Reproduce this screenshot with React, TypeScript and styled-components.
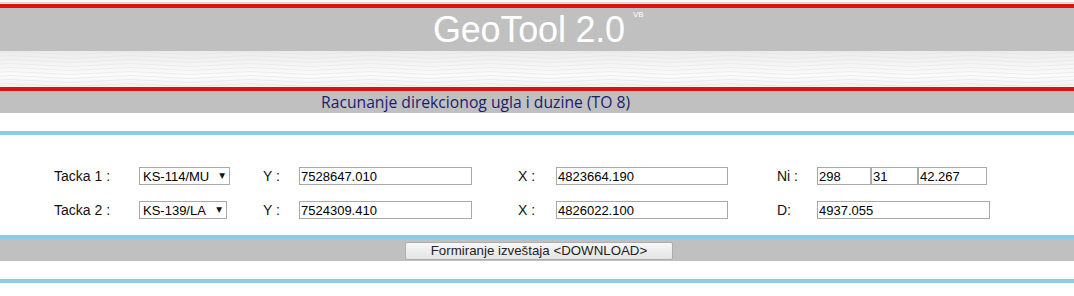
import React from "react";
import styled, { createGlobalStyle } from "styled-components";

const Global = createGlobalStyle`
  html, body { margin: 0; padding: 0; background: #fff; }
  body { font-family: "Liberation Sans", Arial, sans-serif; }
`;

const Page = styled.div`
  width: 1074px;
  display: flex;
  flex-direction: column;
`;

const TopEdge = styled.div`
  height: 4px;
  background: linear-gradient(to bottom, #fbf8f8 0 2px, #e2d6d6 2px 3px, #f4e4e4 3px 4px);
`;

const Rule = styled.div<{ $color: string; $h?: number }>`
  height: ${(p) => p.$h ?? 4}px;
  background: ${(p) => p.$color};
`;

const TitleBand = styled.div`
  height: 43px;
  box-sizing: border-box;
  padding: 2px 0 0 433px;
  background: #c0c0c0;
  display: flex;
  align-items: flex-start;
`;

const Title = styled.h1`
  margin: 0;
  font-family: "Liberation Sans", Arial, sans-serif;
  font-weight: normal;
  font-size: 36px;
  line-height: 40px;
  color: #ffffff;
  letter-spacing: -0.2px;
`;

const Version = styled.span`
  font-family: "Liberation Sans", Arial, sans-serif;
  font-size: 8px;
  line-height: 8px;
  color: #ffffff;
  margin: 1px 0 0 8px;
`;

const WaveBand = styled.div`
  height: 36px;
  background: linear-gradient(to bottom, #ececec 0%, #f7f7f7 45%, #fbfbfb 70%, #f2f2f2 100%);
  overflow: hidden;
  svg { display: block; }
`;

const SubBand = styled.div`
  height: 22px;
  background: #c0c0c0;
  display: flex;
  align-items: center;
  padding-left: 321px;
`;

const Subtitle = styled.div`
  font-family: "Open Sans", sans-serif;
  font-size: 15.7px;
  line-height: 20px;
  color: #1c1c6c;
`;

const Spacer = styled.div<{ $h: number }>`
  height: ${(p) => p.$h}px;
`;

const Form = styled.div`
  padding: 32px 0 16px 54px;
  display: flex;
  flex-direction: column;
  gap: 16px;
`;

const Row = styled.div`
  display: grid;
  grid-template-columns: 85px 124px 36px 219px 38px 221px 40px auto;
  align-items: center;
  height: 18px;
`;

const Label = styled.span`
  font-family: "Liberation Sans", Arial, sans-serif;
  font-size: 14px;
  color: #111;
  white-space: pre;
`;

const SelectBox = styled.div<{ $w: number }>`
  width: ${(p) => p.$w}px;
  height: 18px;
  box-sizing: border-box;
  border: 1px solid #a9a9a9;
  background: #fff;
  display: flex;
  align-items: center;
  justify-content: space-between;
  padding: 0 4px 0 3px;
  font-family: "Liberation Sans", Arial, sans-serif;
  font-size: 13px;
  color: #000;
`;

const Arrow = styled.span`
  font-family: "DejaVu Sans", sans-serif;
  font-size: 7.5px;
  line-height: 8px;
  color: #111;
`;

const Input = styled.input<{ $w: number }>`
  width: ${(p) => p.$w}px;
  height: 18px;
  box-sizing: border-box;
  border: 1px solid #a9a9a9;
  padding: 0 1px;
  margin: 0;
  font-family: "Liberation Sans", Arial, sans-serif;
  font-size: 13px;
  color: #000;
  background: #fff;
  outline: none;
`;

const Group = styled.div`
  display: flex;
`;

const ButtonBand = styled.div`
  height: 22px;
  background: #c0c0c0;
  display: flex;
  align-items: flex-start;
  padding: 3px 0 0 405px;
  box-sizing: border-box;
`;

const Button = styled.button`
  width: 268px;
  height: 18px;
  box-sizing: border-box;
  margin: 0;
  padding: 0;
  border: 1px solid #adadad;
  border-radius: 2px;
  background: linear-gradient(to bottom, #f7f7f7, #e4e4e4);
  font-family: "Liberation Sans", Arial, sans-serif;
  font-size: 13.3px;
  color: #222;
  line-height: 16px;
`;

function Waves() {
  const paths: string[] = [];
  for (let i = 0; i < 9; i++) {
    const y = 2 + i * 4;
    let d = `M -20 ${y}`;
    for (let x = -20; x < 1100; x += 120) {
      d += ` Q ${x + 30} ${y - 3} ${x + 60} ${y} T ${x + 120} ${y}`;
    }
    paths.push(d);
  }
  return (
    <svg width="1074" height="36" viewBox="0 0 1074 36">
      {paths.map((d, i) => (
        <path key={i} d={d} fill="none" stroke="#e2e2e2" strokeWidth="0.8" opacity={0.7} />
      ))}
    </svg>
  );
}

export default function App() {
  return (
    <Page>
      <Global />
      <TopEdge />
      <Rule $color="#dd1111" />
      <TitleBand>
        <Title>GeoTool 2.0</Title>
        <Version>VB</Version>
      </TitleBand>
      <WaveBand>
        <Waves />
      </WaveBand>
      <Rule $color="#dd1111" />
      <SubBand>
        <Subtitle>Racunanje direkcionog ugla i duzine (TO 8)</Subtitle>
      </SubBand>
      <Spacer $h={18} />
      <Rule $color="#91cbe1" />
      <Form>
        <Row>
          <Label>Tacka 1 :</Label>
          <SelectBox $w={91}>
            <span>KS-114/MU</span>
            <Arrow>▼</Arrow>
          </SelectBox>
          <Label>Y :</Label>
          <Input $w={173} defaultValue="7528647.010" />
          <Label>X :</Label>
          <Input $w={172} defaultValue="4823664.190" />
          <Label>Ni :</Label>
          <Group>
            <Input $w={54} defaultValue="298" />
            <Input $w={47} defaultValue="31" />
            <Input $w={69} defaultValue="42.267" />
          </Group>
        </Row>
        <Row>
          <Label>Tacka 2 :</Label>
          <SelectBox $w={88}>
            <span>KS-139/LA</span>
            <Arrow>▼</Arrow>
          </SelectBox>
          <Label>Y :</Label>
          <Input $w={173} defaultValue="7524309.410" />
          <Label>X :</Label>
          <Input $w={172} defaultValue="4826022.100" />
          <Label>D:</Label>
          <Input $w={173} defaultValue="4937.055" />
        </Row>
      </Form>
      <Rule $color="#91cbe1" />
      <ButtonBand>
        <Button>Formiranje izveštaja &lt;DOWNLOAD&gt;</Button>
      </ButtonBand>
      <Spacer $h={18} />
      <Rule $color="#91cbe1" />
    </Page>
  );
}
